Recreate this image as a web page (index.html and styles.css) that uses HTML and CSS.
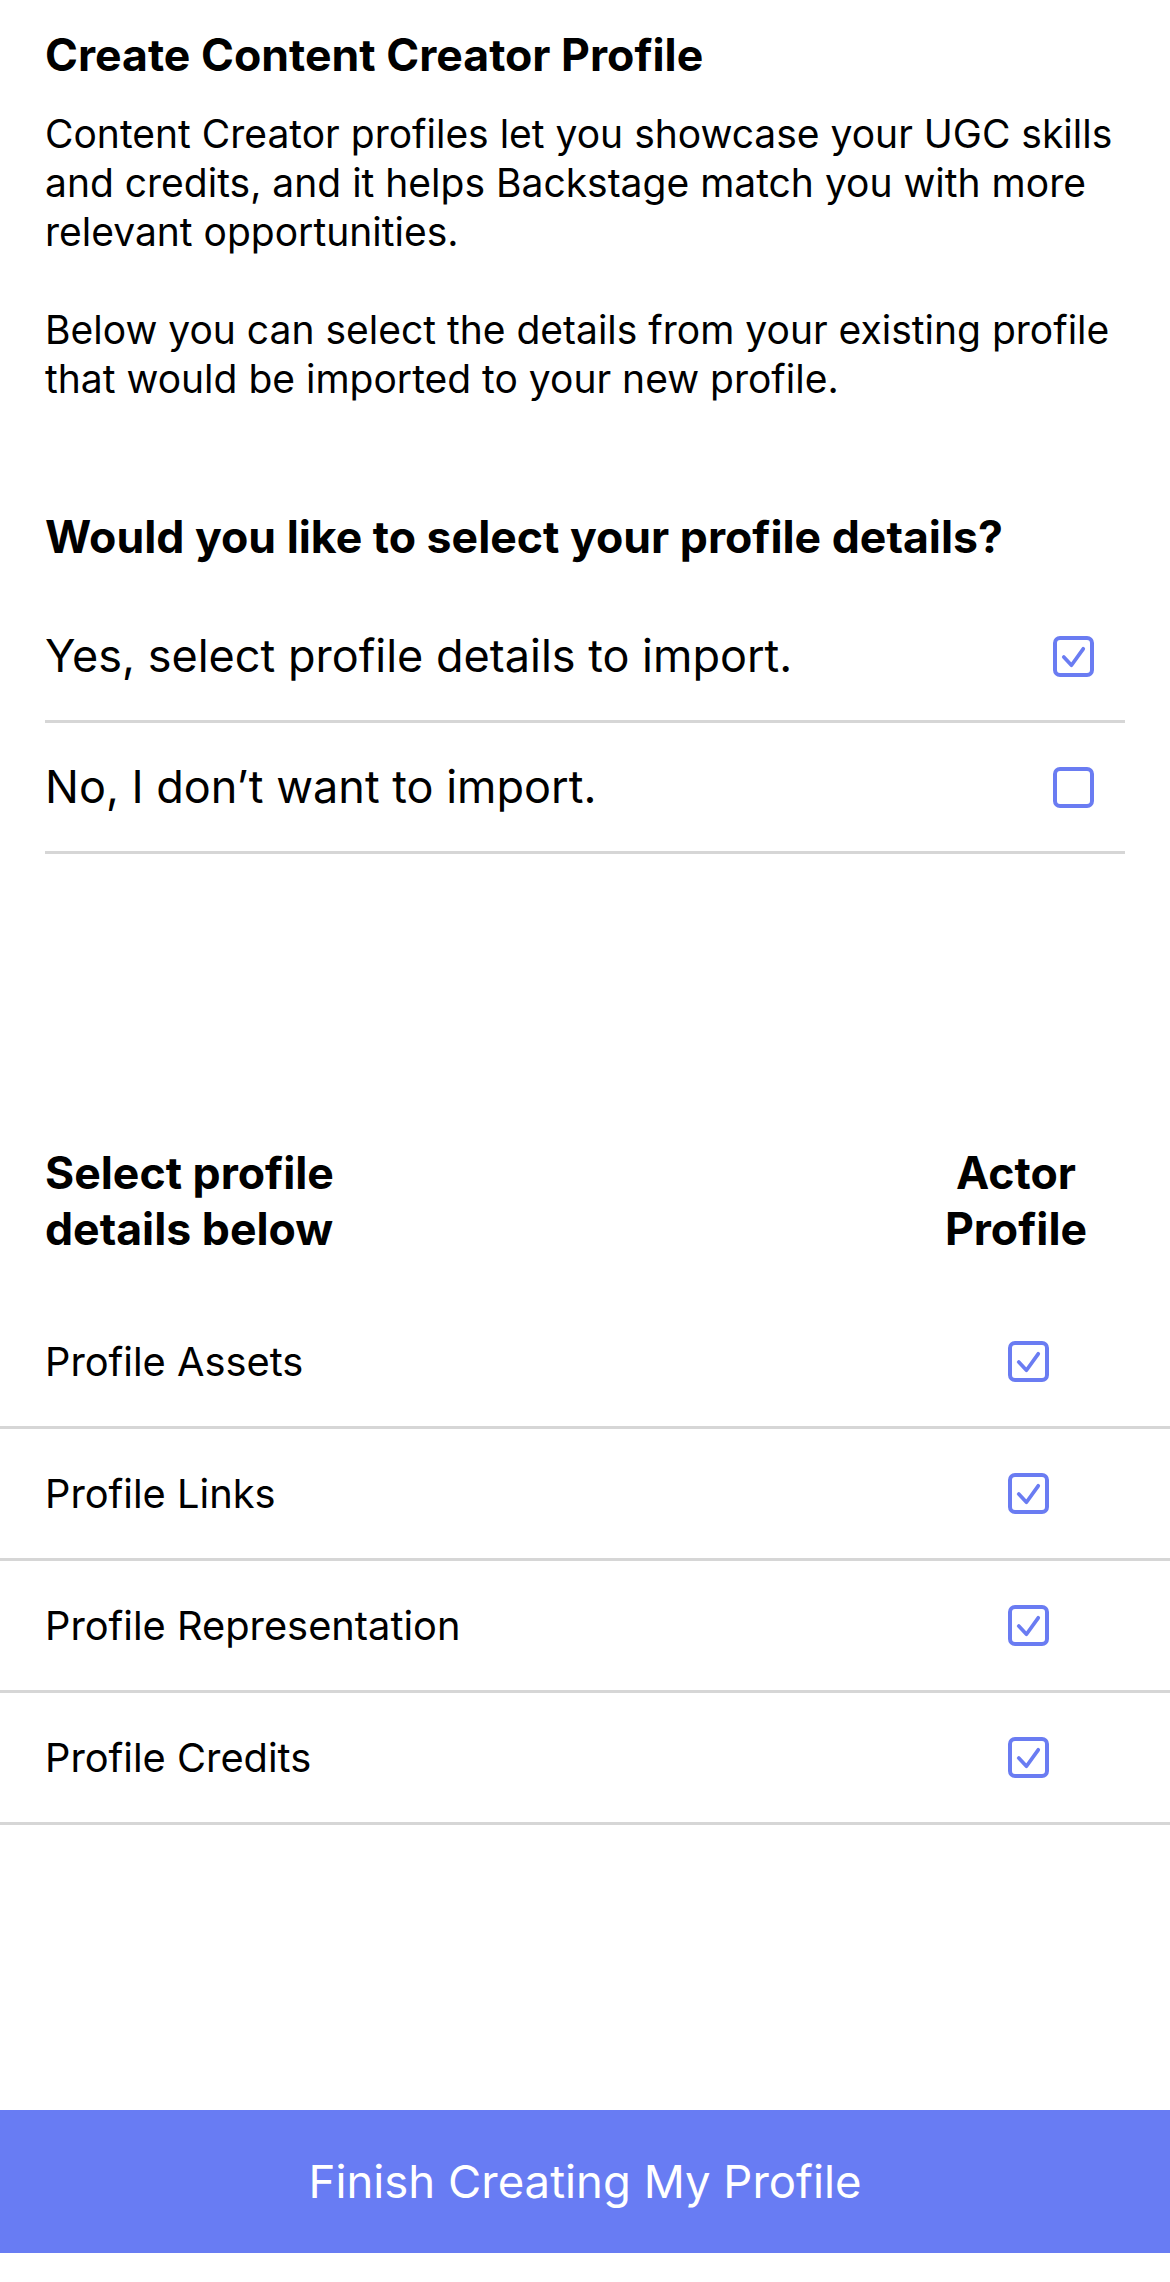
FILE: index.html
```html
<!DOCTYPE html>
<html lang="en">
<head>
<meta charset="utf-8">
<title>Create Content Creator Profile</title>
<link rel="stylesheet" href="styles.css">
</head>
<body>
<main class="page">
  <header class="intro">
    <h1 class="title">Create Content Creator Profile</h1>
    <p class="desc">Content Creator profiles let you showcase your UGC skills and credits, and it helps Backstage match you with more relevant opportunities.</p>
    <p class="desc desc-second">Below you can select the details from your existing profile that would be imported to your new profile.</p>
  </header>

  <section class="question">
    <h2 class="heading">Would you like to select your profile details?</h2>
    <ul class="options">
      <li class="option">
        <span class="option-label">Yes, select profile details to import.</span>
        <span class="checkbox is-checked"><svg viewBox="0 0 40 40" class="tick"><path d="M10.5 20.5 L18 28.5 L29.5 12.5"/></svg></span>
      </li>
      <li class="option">
        <span class="option-label">No, I don’t want to import.</span>
        <span class="checkbox"></span>
      </li>
    </ul>
  </section>

  <section class="details">
    <div class="details-head">
      <h2 class="heading">Select profile<br>details below</h2>
      <div class="col-head">Actor<br>Profile</div>
    </div>
    <ul class="rows">
      <li class="row"><span class="row-label">Profile Assets</span><span class="cell"><span class="checkbox is-checked"><svg viewBox="0 0 40 40" class="tick"><path d="M10.5 20.5 L18 28.5 L29.5 12.5"/></svg></span></span></li>
      <li class="row"><span class="row-label">Profile Links</span><span class="cell"><span class="checkbox is-checked"><svg viewBox="0 0 40 40" class="tick"><path d="M10.5 20.5 L18 28.5 L29.5 12.5"/></svg></span></span></li>
      <li class="row"><span class="row-label">Profile Representation</span><span class="cell"><span class="checkbox is-checked"><svg viewBox="0 0 40 40" class="tick"><path d="M10.5 20.5 L18 28.5 L29.5 12.5"/></svg></span></span></li>
      <li class="row"><span class="row-label">Profile Credits</span><span class="cell"><span class="checkbox is-checked"><svg viewBox="0 0 40 40" class="tick"><path d="M10.5 20.5 L18 28.5 L29.5 12.5"/></svg></span></span></li>
    </ul>
  </section>

  <footer class="actions">
    <button class="finish" type="button">Finish Creating My Profile</button>
  </footer>
</main>
</body>
</html>
```

FILE: styles.css
```css
* { box-sizing: border-box; }

html, body {
  margin: 0;
  padding: 0;
  background: #ffffff;
}

body {
  font-family: Inter, Roboto, "Liberation Sans", sans-serif;
  color: #000000;
}

.page {
  width: 1170px;
  min-height: 2282px;
  display: flex;
  flex-direction: column;
}

.intro {
  padding: 27px 45px 0 45px;
}

.title {
  margin: 0;
  font-size: 44.6px;
  line-height: 56px;
  font-weight: 700;
}

.desc {
  margin: 26px 0 0 0;
  font-size: 39px;
  line-height: 49px;
  font-weight: 400;
}

.desc-second {
  margin-top: 49px;
}

.question {
  padding: 0 45px;
  margin-top: 106px;
}

.heading {
  margin: 0;
  font-size: 44.6px;
  line-height: 56px;
  font-weight: 700;
}

.options {
  list-style: none;
  margin: 27px 0 0 0;
  padding: 0;
}

.option {
  display: flex;
  align-items: center;
  justify-content: space-between;
  height: 131px;
  border-bottom: 3px solid #d6d6d6;
  padding-right: 31px;
}

.option-label {
  font-size: 45px;
  line-height: 54px;
}

.checkbox {
  width: 41px;
  height: 41px;
  border: 4px solid #6a7cf2;
  border-radius: 7px;
  display: inline-flex;
  align-items: center;
  justify-content: center;
  flex: none;
}

.tick {
  width: 41px;
  height: 41px;
  margin: -4px;
  flex: none;
}

.tick path {
  fill: none;
  stroke: #6a7cf2;
  stroke-width: 3.6;
  stroke-linecap: round;
  stroke-linejoin: round;
}

.details {
  margin-top: 291px;
}

.details-head {
  display: grid;
  grid-template-columns: 1fr 160px;
  padding: 0 74px 0 45px;
  align-items: start;
}

.col-head {
  font-size: 44.6px;
  line-height: 56px;
  font-weight: 700;
  text-align: center;
}

.rows {
  list-style: none;
  margin: 40px 0 0 0;
  padding: 0;
}

.row {
  display: grid;
  grid-template-columns: 1fr 160px;
  align-items: center;
  height: 132px;
  border-bottom: 3px solid #d6d6d6;
  padding: 0 62px 0 45px;
}

.row-label {
  font-size: 39.8px;
  line-height: 48px;
}

.cell {
  display: flex;
  justify-content: center;
}

.actions {
  margin-top: auto;
  padding-bottom: 29px;
}

.finish {
  display: block;
  width: 100%;
  height: 143px;
  border: 0;
  margin: 0;
  background: #687cf3;
  color: #ffffff;
  font-family: Inter, Roboto, "Liberation Sans", sans-serif;
  font-size: 45.5px;
  font-weight: 400;
  cursor: pointer;
}
```
